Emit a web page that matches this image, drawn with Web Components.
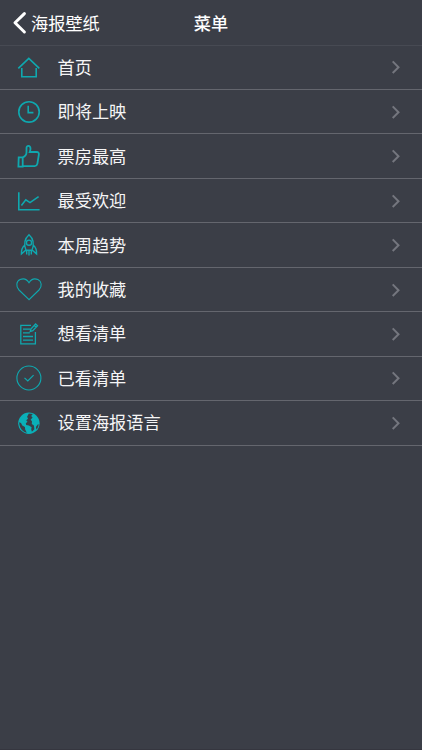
<!DOCTYPE html>
<html lang="zh-CN">
<head>
<meta charset="utf-8">
<title>菜单</title>
<style>
  body {
    margin: 0;
    background: #3b3e47;
    color: #f5f5f6;
    font: 17.2px/24px "Noto Sans CJK SC", sans-serif;
  }
</style>
</head>
<body>
<menu-page>
  <nav-bar slot="header" back="海报壁纸">菜单</nav-bar>
  <menu-row icon="home">首页</menu-row>
  <menu-row icon="clock">即将上映</menu-row>
  <menu-row icon="thumb">票房最高</menu-row>
  <menu-row icon="chart">最受欢迎</menu-row>
  <menu-row icon="rocket">本周趋势</menu-row>
  <menu-row icon="heart">我的收藏</menu-row>
  <menu-row icon="note">想看清单</menu-row>
  <menu-row icon="check">已看清单</menu-row>
  <menu-row icon="globe">设置海报语言</menu-row>
</menu-page>

<script>
const icons = {
  home: `<path d="M3.3 15.4 13.8 5.4l10.5 10M6.8 15v8.8h14.4V15"/>`,
  clock: `<circle cx="14" cy="13.9" r="10.2"/><path d="M13.2 7.8v6.8h5.2"/>`,
  thumb: `<path stroke-width="1.8" d="M3.7 15.4h4v9.2H3.4ZM7.7 15.4c2.5-1.1 3.8-3 3.8-5.2V6c0-2.9 3.8-2.7 4 .5.1 1.5-.5 2.7-.8 3.5h6.9c1.8 0 2.6 1.2 2.2 2.9l-1.4 8.8c-.3 1.7-1.2 2.3-2.7 2.5H7.7"/>`,
  chart: `<path d="M3.8 5.2v17.6h20.8M6.4 18.4l4.4-5.6 4.2 2.8 8.6-6"/>`,
  rocket: `<g stroke-width="1.4"><path d="M11 19.3c-2.2-5.6-1.5-11.5 3-15.5 4.5 4 5.2 9.9 3 15.5ZM9.6 14.3c-2.4 2.2-3.4 4.9-3.2 8.6l3.4-3 1.4-.6M18.4 14.3c2.4 2.2 3.4 4.9 3.2 8.6l-3.4-3-1.4-.6M11.7 20v3.4M14 20v4.6M16.3 20v3.4"/><circle cx="14" cy="11.7" r="2.6"/></g>`,
  heart: `<path stroke-width="1.1" d="M14 23.7 4 14C.5 10.3 1.4 5.2 5.1 3.6 8.7 2 12 3.5 14 6.7c2-3.2 5.3-4.7 8.9-3.1 3.7 1.6 4.6 6.7 1.1 10.4Z"/>`,
  note: `<g stroke-width="1.3"><path d="M16 5.3H5.8v18.5h14.6V12M8 9.2h7.4M8 12.8h6.8M8 16.5h10M8 20.2h10"/><path d="m15.2 11.6.7-2.6 4.7-5 1.9 1.7-4.7 5ZM19.2 5.4l1.9 1.7"/></g>`,
  check: `<circle cx="13.9" cy="14" r="12" stroke-width="1.1"/><path stroke-width="1.2" d="m9.5 13.9 3.3 3.1 5.8-5.9"/>`,
  globe: `<circle cx="13.9" cy="14.2" r="10.7" fill="#0ab0b8" stroke="none"/>
    <path fill="#3b3e47" stroke="none" d="M4.2 13.2 6 14l1.3 2.6 2.6 1.5.3 2.5 1.6 3.2c-4.3-1-7.6-5.2-7.6-10.6ZM13.8 4.5l4 .6-1.6 2 1.4 1.3-2 2.3 1.4 1.6-.2 2.6 2.1 1.6.5 3.7-2.5 2.6-.7-2.5.4-2.1-2.7-1.6-2.7-.6-.4-1.7 1.7-1.5-1.3-1.6 1.8-1.5-.9-1.9ZM22.7 15.5l1-.2c-.2 2.1-1 3.9-2.3 5.3l-.5-2.7Z"/>`
};

class MenuPage extends HTMLElement {
  constructor() {
    super();
    this.attachShadow({ mode: 'open' }).innerHTML = `
      <style>
        :host {
          display: flex;
          flex-direction: column;
          box-sizing: border-box;
          min-height: 100vh;
          border-bottom: 1px solid #35363f;
        }
        main { display: grid; grid-auto-rows: 44.44px; }
      </style>
      <slot name="header"></slot>
      <main><slot></slot></main>
    `;
  }
}

class NavBar extends HTMLElement {
  constructor() {
    super();
    this.attachShadow({ mode: 'open' }).innerHTML = `
      <style>
        :host {
          display: grid;
          grid-template-columns: 1fr auto 1fr;
          align-items: center;
          box-sizing: border-box;
          height: 45.6px;
          padding: 1px 12px 0;
          border-bottom: 1px solid #474a53;
          color: #fff;
        }
        .back { display: flex; align-items: center; gap: 4px; }
        svg { width: 15px; height: 24px; flex: none; }
        .title { font-weight: 500; }
      </style>
      <div class="back">
        <svg viewBox="0 0 15 24" fill="none" stroke="currentColor" stroke-width="3" stroke-linecap="round" stroke-linejoin="round"><path d="M12.4 2.6 3 11.8l9.4 9.2"/></svg>
        <span>${this.getAttribute('back')}</span>
      </div>
      <div class="title"><slot></slot></div>
    `;
  }
}

class MenuRow extends HTMLElement {
  constructor() {
    super();
    this.attachShadow({ mode: 'open' }).innerHTML = `
      <style>
        :host {
          display: flex;
          align-items: center;
          box-sizing: border-box;
          padding: 0 21.5px 0 15px;
          border-bottom: 1px solid #64666e;
        }
        .icon { width: 28px; height: 28px; color: #0fa8af; flex: none; }
        .label { flex: 1; padding: 0 0 1px 14.5px; }
        .arrow { width: 10px; height: 16px; color: #74767e; flex: none; }
      </style>
      <svg class="icon" viewBox="0 0 28 28" fill="none" stroke="currentColor" stroke-width="1.6">${icons[this.getAttribute('icon')]}</svg>
      <span class="label"><slot></slot></span>
      <svg class="arrow" viewBox="0 0 10 16" fill="none" stroke="currentColor" stroke-width="2"><path d="m1.7 2.4 5.8 5.8-5.8 5.8"/></svg>
    `;
  }
}

customElements.define('menu-page', MenuPage);
customElements.define('nav-bar', NavBar);
customElements.define('menu-row', MenuRow);
</script>
</body>
</html>
